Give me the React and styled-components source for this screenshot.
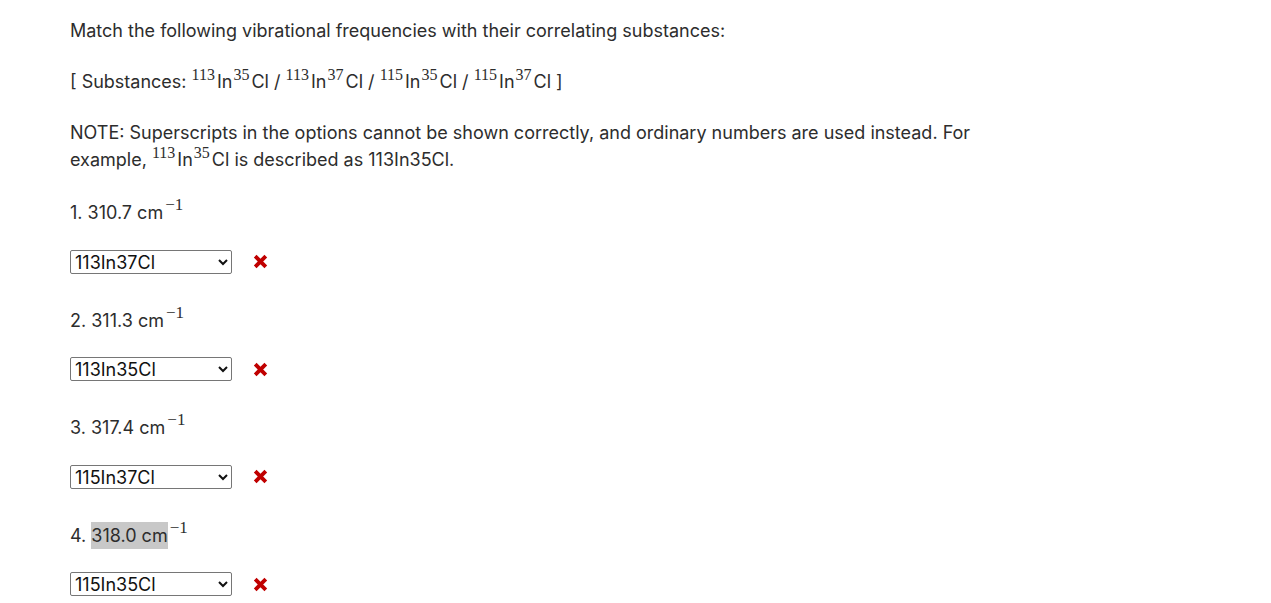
import React from "react";
import styled, { createGlobalStyle } from "styled-components";

const GlobalStyle = createGlobalStyle`
	body {
		margin: 0;
		background: #fff;
		font-family: Inter, "Noto Sans", sans-serif;
		color: #2d2d2d;
	}
`;

const Page = styled.div`
	width: 920px;
	padding: 17px 70px 0;
	font-size: 18px;
	line-height: 27px;
`;

const Para = styled.p`
	margin: 0 0 ${p => p.$gap || 24}px;
`;

const Iso = styled.span`
	white-space: nowrap;
`;

const Sup = styled.sup`
	font-family: "Liberation Serif", "DejaVu Serif", serif;
	font-size: ${p => (p.$unit ? "17px" : "16px")};
	line-height: 0;
	vertical-align: 0;
	position: relative;
	top: -0.52em;
	margin: 0 2px 0 ${p => (p.$pre ? "0" : p.$unit ? "2px" : "1px")};
`;

const Label = styled.p`
	margin: 0 0 22px;
`;

const Marked = styled.span`
	display: inline-block;
	background: #c8c8c8;
`;

const Row = styled.div`
	display: flex;
	align-items: center;
	height: 27px;
	gap: 20px;
	margin-bottom: 31.67px;
`;

const Select = styled.select`
	width: 162px;
	height: 24px;
	border: 1px solid #767676;
	border-radius: 2px;
	background: #fff;
	font-family: Inter, sans-serif;
	font-size: 18px;
	color: #111;
	padding: 0;
`;

const Cross = () => (
	<svg width="17" height="17" viewBox="0 0 16 16">
		<path d="M3 3 L13 13 M13 3 L3 13" stroke="#c00000" strokeWidth="3.6" strokeLinecap="butt" />
	</svg>
);

const Isotope = ({ mass, cl }) => (
	<Iso>
		<Sup $pre>{mass}</Sup>In<Sup>{cl}</Sup>Cl
	</Iso>
);

const options = ["113In35Cl", "113In37Cl", "115In35Cl", "115In37Cl"];

const items = [
	{ n: 1, freq: "310.7", pick: "113In37Cl" },
	{ n: 2, freq: "311.3", pick: "113In35Cl" },
	{ n: 3, freq: "317.4", pick: "115In37Cl" },
	{ n: 4, freq: "318.0", pick: "115In35Cl", marked: true }
];

export default function App() {
	return (
		<Page>
			<GlobalStyle />
			<Para>Match the following vibrational frequencies with their correlating substances:</Para>
			<Para>
				[ Substances: <Isotope mass="113" cl="35" /> / <Isotope mass="113" cl="37" /> /{" "}
				<Isotope mass="115" cl="35" /> / <Isotope mass="115" cl="37" /> ]
			</Para>
			<Para $gap={26}>
				NOTE: Superscripts in the options cannot be shown correctly, and ordinary numbers are used
				instead. For example, <Isotope mass="113" cl="35" /> is described as 113In35Cl.
			</Para>
			{items.map(item => (
				<div key={item.n}>
					<Label>
						{item.n}.{" "}
						{item.marked ? <Marked>{item.freq} cm</Marked> : <>{item.freq} cm</>}
						<Sup $unit>−1</Sup>
					</Label>
					<Row>
						<Select defaultValue={item.pick}>
							{options.map(o => (
								<option key={o}>{o}</option>
							))}
						</Select>
						<Cross />
					</Row>
				</div>
			))}
		</Page>
	);
}
